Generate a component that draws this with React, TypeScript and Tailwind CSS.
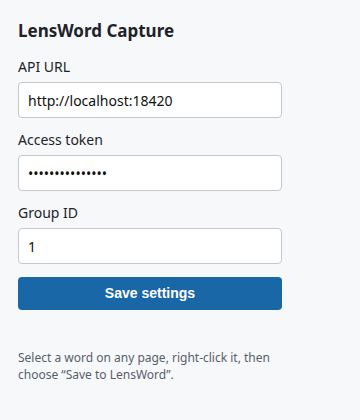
import React, { useState } from 'react';

const font = { fontFamily: '"Segoe UI", "Noto Sans", sans-serif' };

const Field: React.FC<{ label: string; value: string; onChange: (v: string) => void; type?: string }> = ({ label, value, onChange, type = 'text' }) => (
  <label className="flex flex-col">
    <span className="text-[14px] leading-[20px] text-[#1f2328] mb-[5px]">{label}</span>
    <input
      type={type}
      value={value}
      onChange={(e) => onChange(e.target.value)}
      className="h-[36px] w-full rounded-[4px] border border-[#c4c8cc] bg-white px-[9px] text-[14px] text-[#111] outline-none"
    />
  </label>
);

const App: React.FC = () => {
  const [url, setUrl] = useState('http://localhost:18420');
  const [token, setToken] = useState('abcdefghijklmno');
  const [group, setGroup] = useState('1');

  return (
    <div className="min-h-[420px] w-[360px] bg-[#f6f8fa] text-[#1f2328]" style={font}>
      <div className="w-[300px] px-[18px] pt-[19px]">
        <h1 className="text-[17px] leading-[24px] font-bold text-[#1f2328] mb-[14px]">LensWord Capture</h1>
        <div className="flex flex-col gap-[12px]">
          <Field label="API URL" value={url} onChange={setUrl} />
          <Field label="Access token" value={token} onChange={setToken} type="password" />
          <Field label="Group ID" value={group} onChange={setGroup} />
        </div>
        <button
          className="mt-[13px] h-[33px] w-full rounded-[4px] bg-[#1a67a8] text-[14px] font-bold text-white"
          style={{ fontFamily: '"Liberation Sans", Arial, sans-serif' }}
        >
          Save settings
        </button>
        <p className="mt-[39px] text-[12px] leading-[17px] text-[#57606a]">
          Select a word on any page, right-click it, then choose “Save to LensWord”.
        </p>
      </div>
    </div>
  );
};

export default App;
